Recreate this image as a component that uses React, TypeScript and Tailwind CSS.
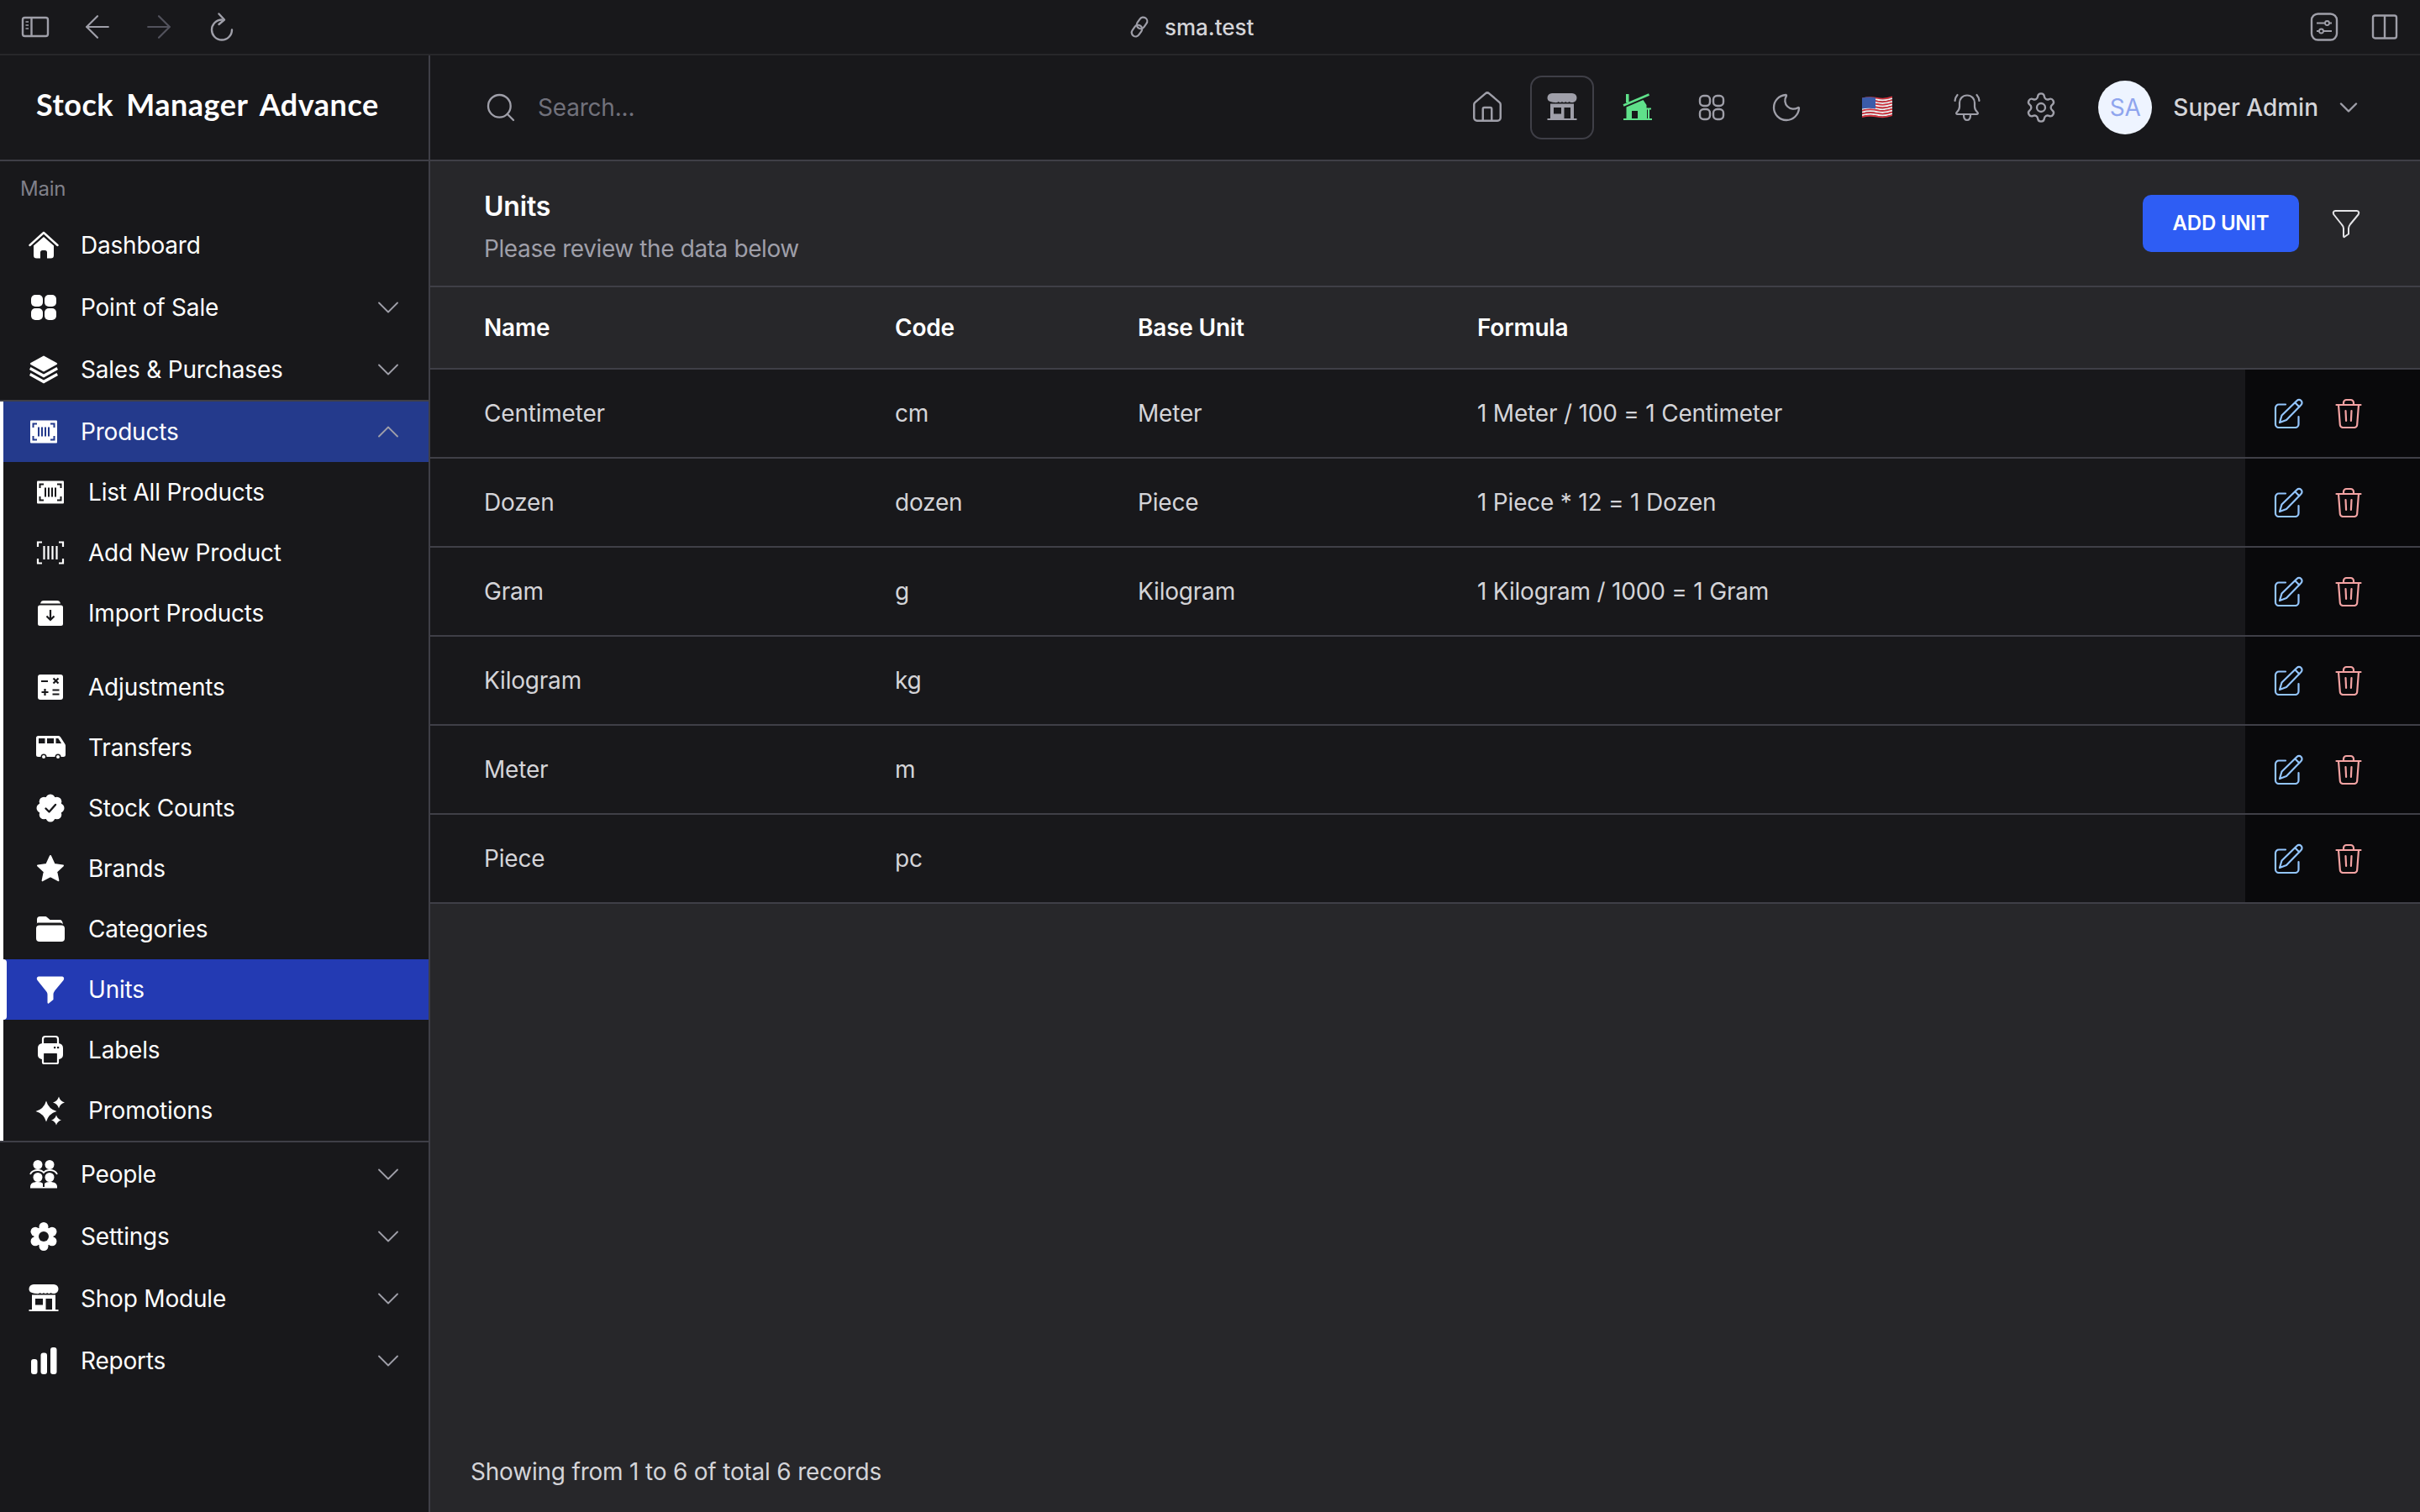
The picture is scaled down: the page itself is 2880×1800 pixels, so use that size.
import { ArrowLeft, ArrowRight, ChevronDown, ChevronUp, House, Moon, Search, Settings } from "lucide-react"
import type { ReactNode } from "react"

const SIDEBAR_BG = "#18181b"
const PRODUCTS_BG = "#243a8c"
const UNITS_BG = "#233ab3"

type IconProps = { cut?: string; className?: string }

const Svg = ({ className = "h-9 w-9", children, box = "0 0 36 36" }: { className?: string; children: ReactNode; box?: string }) => (
  <svg className={`shrink-0 ${className}`} viewBox={box} fill="currentColor" xmlns="http://www.w3.org/2000/svg">
    {children}
  </svg>
)

const HomeSolid = ({ className }: IconProps) => (
  <Svg className={className}>
    <path d="M1.5 18 18 3l16.5 15" fill="none" stroke="currentColor" strokeWidth="2.4" strokeLinecap="round" strokeLinejoin="round" />
    <path d="M6 18.5 18 8l12 10.5V30a3.5 3.5 0 0 1-3.5 3.5H22v-7a2.5 2.5 0 0 0-2.5-2.5h-3a2.5 2.5 0 0 0-2.5 2.5v7H9.5A3.5 3.5 0 0 1 6 30Z" />
  </Svg>
)

const GridSolid = ({ className }: IconProps) => (
  <Svg className={className}>
    <rect x="3" y="3" width="14" height="14" rx="5" />
    <rect x="19" y="3" width="14" height="14" rx="5" />
    <rect x="3" y="19" width="14" height="14" rx="5" />
    <rect x="19" y="19" width="14" height="14" rx="5" />
  </Svg>
)

const Layers = ({ className }: IconProps) => (
  <Svg className={className}>
    <path d="M18 1.5 33.5 10a1.2 1.2 0 0 1 0 2L18 20.5 2.5 12a1.2 1.2 0 0 1 0-2Z" />
    <path d="m2.5 15 15.5 8.5L33.5 15l1.5 3L18 27.5 1 18Z" />
    <path d="m2.5 22 15.5 8.5L33.5 22l1.5 3L18 34.5 1 25Z" />
  </Svg>
)

const BarcodeSolid = ({ cut = SIDEBAR_BG, className }: IconProps) => (
  <Svg className={className}>
    <rect x="2" y="4.5" width="32" height="27" rx="1" />
    <g fill="none" stroke={cut} strokeWidth="2">
      <path d="M10 8.5H5.5V13M26 8.5h4.5V13M10 27.5H5.5V23M26 27.5h4.5V23" />
      <path d="M12 12.500v11M16 12.500v11M20 12.500v11M24 12.500v11" />
    </g>
  </Svg>
)

const BarcodeLine = ({ className }: IconProps) => (
  <Svg className={className}>
    <g fill="none" stroke="currentColor" strokeWidth="2.200">
      <path d="M8 5.500H3V11M28 5.500h5V11M8 30.500H3V25M28 30.500h5V25" />
      <path d="M10.500 10v16M15.500 10v16M20.500 10v16M25.500 10v16" />
    </g>
  </Svg>
)

const ImportBox = ({ cut = SIDEBAR_BG, className }: IconProps) => (
  <Svg className={className}>
    <path d="M6 6.500c.5-2.500 2-3.500 4-3.500h16c2 0 3.500 1 4 3.500Z" />
    <rect x="3" y="8.500" width="30" height="24.500" rx="2.500" />
    <path d="M18 14v12M13.500 21.500 18 26l4.500-4.500" fill="none" stroke={cut} strokeWidth="2.200" />
  </Svg>
)

const Calculator = ({ cut = SIDEBAR_BG, className }: IconProps) => (
  <Svg className={className}>
    <rect x="3" y="3" width="30" height="30" rx="3" />
    <path d="M7 11h8M21.500 7.500l6 6M27.500 7.500l-6 6M7.500 24h8M11.500 20v8M20.500 21.500h8M20.500 26.500h8" fill="none" stroke={cut} strokeWidth="2.200" />
  </Svg>
)

const Van = ({ cut = SIDEBAR_BG, className }: IconProps) => (
  <Svg className={className}>
    <path d="M3.500 4H27c1.500 0 2.500.5 3.200 1.700L35.500 14c.4.700.5 1.200.5 2v10.500c0 1.700-1 2.500-2.500 2.500h-30C1.800 29 1 28.200 1 26.500v-20C1 5 2 4 3.500 4Z" />
    <path d="M4 7h7.500v6H4ZM14 7h8v6h-8ZM24.500 7h2.800l3.800 6h-6.600Z" fill={cut} />
    <circle cx="10" cy="29" r="3.500" fill={cut} />
    <circle cx="27" cy="29" r="3.500" fill={cut} />
    <circle cx="10" cy="29" r="2" />
    <circle cx="27" cy="29" r="2" />
  </Svg>
)

const BadgeCheck = ({ cut = SIDEBAR_BG, className }: IconProps) => (
  <Svg className={className}>
    <circle cx="18" cy="18" r="14" />
    {[0, 45, 90, 135, 180, 225, 270, 315].map((a) => (
      <circle key={a} cx={18 + 11 * Math.cos((a * Math.PI) / 180)} cy={18 + 11 * Math.sin((a * Math.PI) / 180)} r="5.500" />
    ))}
    <path d="m12.500 18.500 4 4 7.500-8.500" fill="none" stroke={cut} strokeWidth="2.400" strokeLinecap="round" strokeLinejoin="round" />
  </Svg>
)

const StarSolid = ({ className }: IconProps) => (
  <Svg className={className}>
    <path d="m18 3 4.600 10 10.400 1.400-7.800 7.300 2.200 10.500L18 27l-9.400 5.200 2.200-10.500L3 14.400 13.400 13Z" stroke="currentColor" strokeWidth="2" strokeLinejoin="round" />
  </Svg>
)

const Folder = ({ className }: IconProps) => (
  <Svg className={className}>
    <path d="M4 11.500V5.500A3.500 3.500 0 0 1 7.500 2h6c1.200 0 2 .5 2.800 1.200L19.500 6h11.500c2.200 0 3.500 1.500 3.900 5.500-1-1.500-2.500-2-4-2H5c-1 0-1.500 1-1 2Z" transform="translate(-2 1)" />
    <rect x="1" y="13.500" width="34" height="19.500" rx="4" />
  </Svg>
)

const FunnelSolid = ({ className }: IconProps) => (
  <Svg className={className}>
    <path d="M5 2.500h26c3 0 4 2 2.500 4.500L23.500 19c-1.500 2-2 3.500-2 5v6l-5.500 4.500c-1 .5-1.500 0-1.500-1.500v-9c0-1.500-.5-3-2-4.500L2.500 7C1 4.500 2 2.500 5 2.500Z" />
  </Svg>
)

const Printer = ({ cut = SIDEBAR_BG, className }: IconProps) => (
  <Svg className={className}>
    <path d="M9 11V5a3 3 0 0 1 3-3h12a3 3 0 0 1 3 3v6" fill="none" stroke="currentColor" strokeWidth="2.200" />
    <path d="M8.500 10h19A5.500 5.500 0 0 1 33 15.500V24a5 5 0 0 1-5 5H8a5 5 0 0 1-5-5v-8.500A5.500 5.500 0 0 1 8.500 10Z" />
    <rect x="9" y="21" width="18" height="13" rx="1.500" fill={cut} stroke="currentColor" strokeWidth="2.200" />
    <rect x="22" y="14" width="2.200" height="2.200" fill={cut} />
    <rect x="26" y="14" width="2.200" height="2.200" fill={cut} />
  </Svg>
)

const star4 = (x: number, y: number, r: number) => {
  const k = r * 0.22
  return `M${x} ${y - r}Q${x + k} ${y - k} ${x + r} ${y}Q${x + k} ${y + k} ${x} ${y + r}Q${x - k} ${y + k} ${x - r} ${y}Q${x - k} ${y - k} ${x} ${y - r}Z`
}

const Sparkles = ({ className }: IconProps) => (
  <Svg className={className}>
    <path d={star4(13, 19, 12.500)} />
    <path d={star4(28, 8.500, 7)} />
    <path d={star4(25, 29.500, 6)} />
  </Svg>
)

const PeopleSolid = ({ className }: IconProps) => (
  <Svg className={className}>
    <circle cx="11" cy="6.500" r="5.500" />
    <circle cx="25" cy="6.500" r="5.500" />
    <path d="M2 18c1.500-3.500 5-5 9-5 3 0 5.500 1 7 3 1.500-2 4-3 7-3 4 0 7.500 1.500 9 5" fill="none" stroke="currentColor" strokeWidth="1.800" />
    <circle cx="11" cy="21.500" r="5.500" />
    <circle cx="25" cy="21.500" r="5.500" />
    <path d="M2 33c0-4 3-6 9-6 3 0 5 .7 6 2v4ZM34 33c0-4-3-6-9-6-3 0-5 .7-6 2v4Z" />
    <rect x="2" y="33" width="32" height="1.500" />
  </Svg>
)

const GearSolid = ({ cut = SIDEBAR_BG, className }: IconProps) => (
  <Svg className={className}>
    <circle cx="18" cy="18" r="11.500" />
    {[30, 90, 150, 210, 270, 330].map((a) => (
      <circle key={a} cx={18 + 11.500 * Math.cos((a * Math.PI) / 180)} cy={18 + 11.500 * Math.sin((a * Math.PI) / 180)} r="5.500" />
    ))}
    <circle cx="18" cy="18" r="6" fill={cut} />
  </Svg>
)

const ShopSolid = ({ cut = SIDEBAR_BG, className }: IconProps) => (
  <Svg className={className}>
    <path d="M6 1h24a5.500 5.500 0 0 1 5.500 5.500c0 3-2 5-4.500 5.500-1 .2-3.500.2-4.500-1-1 1.300-3.500 1.300-4.300 0-1 1.300-3.300 1.300-4.200 0-1 1.300-3.300 1.300-4.300 0-1 1.200-3.500 1.300-4.500 1C2.500 11.500.5 9.500.5 6.500A5.500 5.500 0 0 1 6 1Z" />
    <path d="M4 13.500h28V31H4Z" />
    <path d="M8 18h9v7.500H8ZM20.500 18H28v13h-7.500Z" fill={cut} />
    <rect x="0.500" y="31" width="35" height="2" />
  </Svg>
)

const BarsSolid = ({ className }: IconProps) => (
  <Svg className={className}>
    <rect x="3" y="16" width="7.500" height="18" rx="3" />
    <rect x="14.500" y="8.500" width="7.500" height="25.500" rx="3" />
    <rect x="26" y="2" width="7.500" height="32" rx="3" />
  </Svg>
)

const GreenHouse = ({ className }: IconProps) => (
  <Svg className={className}>
    <path d="M1 15.500 31.500 2.500" fill="none" stroke="currentColor" strokeWidth="2.600" />
    <rect x="4" y="2" width="3.500" height="10" />
    <path d="M4.500 17.500 24.500 9l4 6v3.500h5.500v2h-2V31h-2V20.500h-1V31H4.500Z" />
    <path d="M11 22h7v9h-7Z" fill="#18181b" />
    <rect x="1" y="31" width="34" height="2" />
  </Svg>
)

const GridLine = ({ className }: IconProps) => (
  <Svg className={className}>
    <g fill="none" stroke="currentColor" strokeWidth="2.400">
      <rect x="4" y="4" width="12" height="12" rx="4.500" />
      <rect x="20" y="4" width="12" height="12" rx="4.500" />
      <rect x="4" y="20" width="12" height="12" rx="4.500" />
      <rect x="20" y="20" width="12" height="12" rx="4.500" />
    </g>
  </Svg>
)

const BellRinging = ({ className }: IconProps) => (
  <Svg className={className}>
    <g fill="none" stroke="currentColor" strokeWidth="2.200" strokeLinecap="round" strokeLinejoin="round">
      <path d="M18 3.500c-5.500 0-9 4-9 9v4.500c0 3-1.500 5-3.500 7-.8 1-.3 2 1 2h23c1.300 0 1.800-1 1-2-2-2-3.500-4-3.500-7v-4.500c0-5-3.500-9-9-9Z" />
      <path d="M14 27c0 4 1.500 6 4 6s4-2 4-6M3.500 10c.3-2.500 1.200-5 3-7M32.500 10c-.3-2.500-1.200-5-3-7" />
    </g>
  </Svg>
)

const UsFlag = () => (
  <svg className="h-7 w-9 shrink-0" viewBox="0 0 36 28" fill="none" xmlns="http://www.w3.org/2000/svg">
    {Array.from({ length: 13 }, (_, i) => (
      <path
        key={i}
        d={`M0 ${3.500 + i * 1.800}Q9 ${1 + i * 1.800} 18 ${3 + i * 1.800}T36 ${1.500 + i * 1.800}`}
        stroke={i % 2 === 0 ? "#d3343f" : "#f4f4f5"}
        strokeWidth="1.900"
      />
    ))}
    <path d="M0 2.500Q8 .5 16 2.300V15.500Q8 13.800 0 15.500Z" fill="#3b5ba9" />
  </svg>
)

const PanelLeft = () => (
  <svg className="h-7 w-9 shrink-0 text-zinc-400" viewBox="0 0 36 28" fill="none" stroke="currentColor" strokeWidth="2.400">
    <rect x="3" y="3" width="30" height="22" rx="2.500" />
    <path d="M13.500 3v22" />
    <path d="M6.500 8h3.500M6.500 12h3.500M6.500 16h3.500" strokeWidth="1.600" />
  </svg>
)

const Reload = () => (
  <svg className="h-9 w-8 shrink-0 text-zinc-400" viewBox="0 0 32 36" fill="none" stroke="currentColor" strokeWidth="2.400" strokeLinecap="round" strokeLinejoin="round">
    <path d="M16 9.500a12 12 0 1 0 12 12" />
    <path d="m12.500 2.500 6.500 7-6.500 5.500" />
  </svg>
)

const ChainLink = () => (
  <svg className="h-7 w-7 shrink-0 text-zinc-400" viewBox="0 0 28 28" fill="none" stroke="currentColor" strokeWidth="2.200">
    <rect x="12.500" y="2" width="9.500" height="14.500" rx="4.700" transform="rotate(35 17 9)" />
    <rect x="6" y="11.500" width="9.500" height="14.500" rx="4.700" transform="rotate(35 11 19)" />
  </svg>
)

const SlidersBox = () => (
  <svg className="h-9 w-9 shrink-0 text-zinc-400" viewBox="0 0 36 36" fill="none" stroke="currentColor" strokeWidth="2">
    <rect x="3" y="2.500" width="30" height="31" rx="7.500" strokeWidth="2.400" />
    <path d="M9 13.500h10M24 13.500h3M9 23h3M17 23h10" strokeWidth="1.800" />
    <circle cx="21.500" cy="13.500" r="2.500" strokeWidth="1.800" />
    <circle cx="14.500" cy="23" r="2.500" strokeWidth="1.800" />
  </svg>
)

const SplitPanel = () => (
  <svg className="h-8 w-8 shrink-0 text-zinc-400" viewBox="0 0 32 32" fill="none" stroke="currentColor" strokeWidth="2.400">
    <rect x="2" y="2.500" width="28" height="27" rx="2.500" />
    <path d="M16 2.500v27" />
  </svg>
)

const FilterLine = () => (
  <svg className="h-9 w-9 shrink-0 text-zinc-200" viewBox="0 0 36 36" fill="none" stroke="currentColor" strokeWidth="2" strokeLinejoin="round">
    <path d="M5.500 3h25c2.500 0 3.500 2 2 4.500L23 19c-1.500 2-2 3-2 5v6.500l-5 3.500c-.6.300-1 0-1-1v-9c0-1.500-.5-3-2-4.500L3.500 7.500C2 5 3 3 5.500 3Z" />
  </svg>
)

const EditIcon = () => (
  <svg className="h-[36px] w-[36px] shrink-0 text-[#93c5fd]" viewBox="0 0 36 36" fill="none" stroke="currentColor" strokeWidth="2.200" strokeLinejoin="round" strokeLinecap="round">
    <path d="M14 7.500H6a4 4 0 0 0-4 4V31a4 4 0 0 0 4 4h19.500a4 4 0 0 0 4-4v-9" />
    <path d="m7 29 2.500-8.500L27.500 3a3.400 3.400 0 0 1 5 5L15 26Z" />
    <path d="m25.500 5.500 4.700 4.700" />
  </svg>
)

const TrashIcon = () => (
  <svg className="h-[36px] w-[32px] shrink-0 text-[#f4a3a3]" viewBox="0 0 32 36" fill="none" stroke="currentColor" strokeWidth="2.200" strokeLinejoin="round" strokeLinecap="round">
    <path d="M1.500 8h29" />
    <path d="M10 8V5.500A3.500 3.500 0 0 1 13.500 2h5A3.500 3.500 0 0 1 22 5.500V8" />
    <path d="m4 8 1.800 23.500A3.500 3.500 0 0 0 9.300 35h13.400a3.500 3.500 0 0 0 3.500-3.500L28 8" />
    <path d="M12.500 15l.6 12M19.500 15l-.6 12" />
  </svg>
)

type NavItem = { label: string; icon: (p: IconProps) => ReactNode; chevron?: boolean }

const topItems: NavItem[] = [
  { label: "Dashboard", icon: HomeSolid },
  { label: "Point of Sale", icon: GridSolid, chevron: true },
  { label: "Sales & Purchases", icon: Layers, chevron: true },
]

const productItems: NavItem[] = [
  { label: "List All Products", icon: BarcodeSolid },
  { label: "Add New Product", icon: BarcodeLine },
  { label: "Import Products", icon: ImportBox },
]

const stockItems: NavItem[] = [
  { label: "Adjustments", icon: Calculator },
  { label: "Transfers", icon: Van },
  { label: "Stock Counts", icon: BadgeCheck },
  { label: "Brands", icon: StarSolid },
  { label: "Categories", icon: Folder },
  { label: "Units", icon: FunnelSolid },
  { label: "Labels", icon: Printer },
  { label: "Promotions", icon: Sparkles },
]

const bottomItems: NavItem[] = [
  { label: "People", icon: PeopleSolid, chevron: true },
  { label: "Settings", icon: GearSolid, chevron: true },
  { label: "Shop Module", icon: ShopSolid, chevron: true },
  { label: "Reports", icon: BarsSolid, chevron: true },
]

const units = [
  { name: "Centimeter", code: "cm", base: "Meter", formula: "1 Meter / 100 = 1 Centimeter" },
  { name: "Dozen", code: "dozen", base: "Piece", formula: "1 Piece * 12 = 1 Dozen" },
  { name: "Gram", code: "g", base: "Kilogram", formula: "1 Kilogram / 1000 = 1 Gram" },
  { name: "Kilogram", code: "kg", base: "", formula: "" },
  { name: "Meter", code: "m", base: "", formula: "" },
  { name: "Piece", code: "pc", base: "", formula: "" },
]

const TopRow = ({ item }: { item: NavItem }) => {
  const Icon = item.icon
  return (
    <div className="flex h-[74px] items-center pl-[34px] pr-[26px] text-[28px] text-white">
      <Icon />
      <span className="ml-[26px] flex-1">{item.label}</span>
      {item.chevron && <ChevronDown className="h-11 w-11 text-zinc-400" strokeWidth={1} />}
    </div>
  )
}

const SubRow = ({ item }: { item: NavItem }) => {
  const Icon = item.icon
  const active = item.label === "Units"
  return (
    <div className={`relative flex h-[72px] items-center pl-[38px] text-[28px] text-white ${active ? "bg-[#233ab3]" : ""}`}>
      {active && <span className="absolute -left-px top-0 h-full w-[5px] rounded-r-sm bg-white" />}
      <Icon cut={active ? UNITS_BG : SIDEBAR_BG} />
      <span className="ml-[27px]">{item.label}</span>
    </div>
  )
}

const Sidebar = () => (
  <aside className="flex w-[512px] shrink-0 flex-col border-r-2 border-zinc-700 bg-[#18181b]">
    <div className="flex h-[126px] items-center border-b-2 border-zinc-700 pb-[8px] pl-[43px] font-['Lato',sans-serif] text-[36px] font-bold tracking-[0.5px] text-white [word-spacing:6px]">
      Stock Manager Advance
    </div>
    <div className="flex h-[63px] items-center pl-[24px] pt-[3px] text-[24px] text-[#80808a]">Main</div>
    {topItems.map((item) => (
      <TopRow key={item.label} item={item} />
    ))}
    <div className="-mt-px border-y-2 border-zinc-700">
      <div className="border-l-4 border-white">
        <div className="flex h-[72px] items-center bg-[#243a8c] pl-[30px] pr-[26px] text-[28px] text-white">
          <BarcodeSolid cut={PRODUCTS_BG} />
          <span className="ml-[26px] flex-1">Products</span>
          <ChevronUp className="h-11 w-11 text-zinc-400" strokeWidth={1} />
        </div>
        <div className="flex flex-col gap-[16px]">
          <div>
            {productItems.map((item) => (
              <SubRow key={item.label} item={item} />
            ))}
          </div>
          <div>
            {stockItems.map((item) => (
              <SubRow key={item.label} item={item} />
            ))}
          </div>
        </div>
      </div>
    </div>
    <div className="pt-px">
      {bottomItems.map((item) => (
        <TopRow key={item.label} item={item} />
      ))}
    </div>
  </aside>
)

const BrowserBar = () => (
  <div className="relative flex h-[66px] shrink-0 items-center justify-between border-b-2 border-[#27272a] bg-[#18181b] pl-[24px] pr-[26px]">
    <div className="flex items-center">
      <PanelLeft />
      <ArrowLeft className="ml-[34px] h-11 w-11 text-zinc-400" strokeWidth={1.2} />
      <ArrowRight className="ml-[29px] h-11 w-11 text-zinc-600" strokeWidth={1.2} />
      <div className="ml-[37px]">
        <Reload />
      </div>
    </div>
    <div className="absolute left-[1342px] top-0 flex h-[64px] items-center gap-[16px]">
      <ChainLink />
      <span className="text-[26px] font-medium tracking-normal text-zinc-300">sma.test</span>
    </div>
    <div className="flex items-center gap-[38px]">
      <SlidersBox />
      <SplitPanel />
    </div>
  </div>
)

const Header = () => (
  <header className="flex h-[126px] shrink-0 items-center border-b-2 border-zinc-700 bg-[#18181b] pl-[64px] pr-[67px] text-zinc-400">
    <Search className="h-10 w-10" strokeWidth={1.4} />
    <span className="ml-[24px] flex-1 text-[28px] text-zinc-500">Search...</span>
    <House className="h-[42px] w-[42px]" strokeWidth={1.4} />
    <div className="ml-[30px] flex h-[76px] w-[76px] items-center justify-center rounded-[14px] border-2 border-zinc-700">
      <ShopSolid className="h-9 w-9" />
    </div>
    <div className="ml-[34px] text-[#5fe08a]">
      <GreenHouse />
    </div>
    <div className="ml-[52px]">
      <GridLine />
    </div>
    <Moon className="ml-[51px] h-10 w-10" strokeWidth={1.4} />
    <div className="ml-[70px]">
      <UsFlag />
    </div>
    <div className="ml-[71px]">
      <BellRinging />
    </div>
    <Settings className="ml-[50px] h-10 w-10" strokeWidth={1.4} />
    <div className="ml-[48px] flex h-[64px] w-[64px] items-center justify-center rounded-full bg-[#eef4ff] text-[28px] text-[#8fa5ee]">
      SA
    </div>
    <span className="ml-[25px] text-[28px] font-medium tracking-normal text-zinc-300">Super Admin</span>
    <ChevronDown className="ml-[18px] h-9 w-9" strokeWidth={1.6} />
  </header>
)

const UnitsTable = () => (
  <table className="w-full table-fixed text-left text-[28px]">
    <colgroup>
      <col className="w-[553px]" />
      <col className="w-[289px]" />
      <col className="w-[404px]" />
      <col />
      <col className="w-[208px]" />
    </colgroup>
    <thead className="bg-[#27272a] text-white">
      <tr className="h-[98px] border-y-2 border-zinc-700">
        <th className="pl-[64px] font-semibold">Name</th>
        <th className="font-semibold">Code</th>
        <th className="font-semibold">Base Unit</th>
        <th className="font-semibold">Formula</th>
        <th />
      </tr>
    </thead>
    <tbody className="bg-[#18181b] text-zinc-300">
      {units.map((unit) => (
        <tr key={unit.name} className="h-[106px] border-b-2 border-zinc-700">
          <td className="pl-[64px]">{unit.name}</td>
          <td>{unit.code}</td>
          <td>{unit.base}</td>
          <td>{unit.formula}</td>
          <td className="bg-[#09090b]">
            <div className="flex items-center pl-[34px]">
              <EditIcon />
              <div className="ml-[37px]">
                <TrashIcon />
              </div>
            </div>
          </td>
        </tr>
      ))}
    </tbody>
  </table>
)

const App = () => (
  <div className="flex h-screen w-screen flex-col overflow-hidden bg-[#27272a] font-['Inter',sans-serif] tracking-[-0.2px]">
    <BrowserBar />
    <div className="flex min-h-0 flex-1">
      <Sidebar />
      <div className="flex min-w-0 flex-1 flex-col">
        <Header />
        <main className="flex flex-1 flex-col">
          <div className="flex h-[148px] items-center justify-between pl-[64px] pr-[70px]">
            <div className="pt-[7px]">
              <h1 className="text-[32px] font-semibold leading-[44px] text-white">Units</h1>
              <p className="mt-[8px] text-[28px] leading-[40px] tracking-[-0.4px] text-zinc-400">Please review the data below</p>
            </div>
            <div className="flex items-center gap-[38px]">
              <button className="flex h-[68px] w-[186px] items-center justify-center rounded-[10px] bg-[#2e5df4] text-[24px] font-semibold text-white">
                ADD UNIT
              </button>
              <FilterLine />
            </div>
          </div>
          <UnitsTable />
          <div className="flex-1" />
          <div className="flex h-[96px] items-center pl-[48px] text-[28px] text-zinc-300">
            Showing from 1 to 6 of total 6 records
          </div>
        </main>
      </div>
    </div>
  </div>
)

export default App
